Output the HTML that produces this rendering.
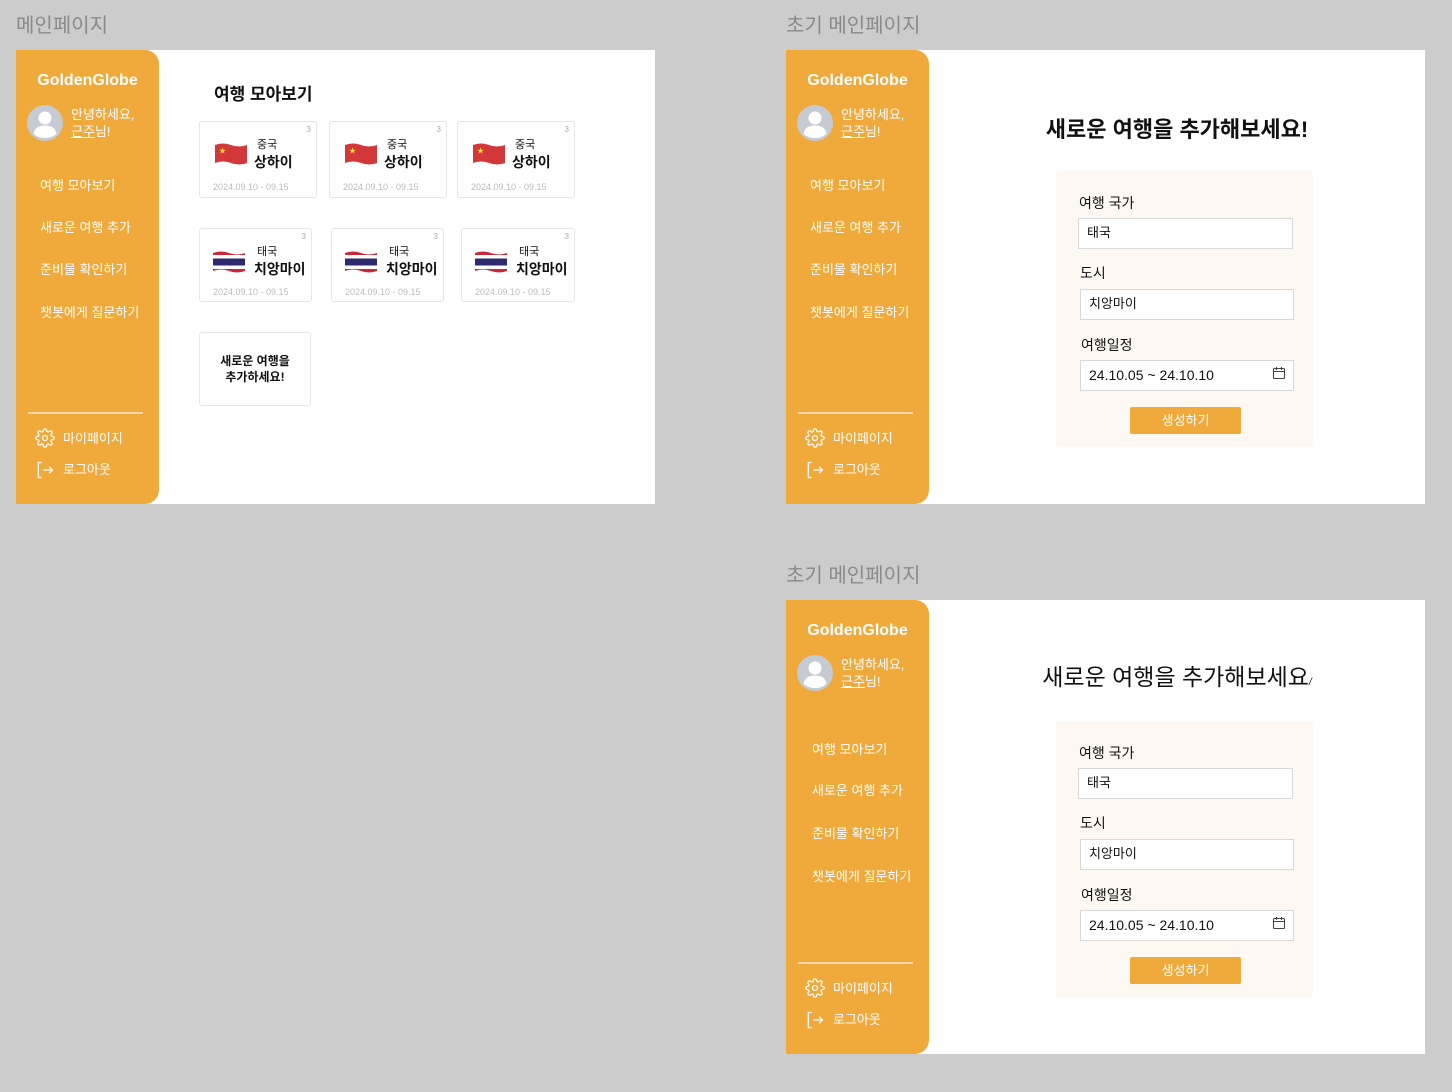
<!DOCTYPE html>
<html><head><meta charset="utf-8">
<style>
*{margin:0;padding:0;box-sizing:border-box}
body{width:1452px;height:1092px;background:#cccccc;position:relative;overflow:hidden;font-family:"Liberation Sans","Noto Sans CJK KR",sans-serif;color:#111}
.abs{position:absolute}
.lbl{position:absolute;font-size:20px;color:#8a8a8a;line-height:1}
.frame{position:absolute;width:639px;height:454px;background:#fff}
.side{position:absolute;left:0;top:0;width:143px;height:454px;background:#F0A93B;border-radius:0 14px 14px 0;color:#fff}
.logo{position:absolute;left:0;width:143px;top:22px;text-align:center;font-weight:bold;font-size:16px;line-height:18px}
.av{position:absolute;left:11px;top:55px}
.hi{position:absolute;left:55px;top:56px;font-size:13px;line-height:17px}
.hi u{text-decoration:underline}
.nav{position:absolute;font-size:13px;line-height:16px;white-space:nowrap}
.div{position:absolute;left:12px;top:362px;width:115px;height:1.5px;background:rgba(255,255,255,.55)}
.bi{position:absolute;left:47px;font-size:13px;line-height:16px}
.card{position:absolute;background:#fff;border:1px solid #e6e6e6;border-radius:3px}
.card .n{position:absolute;right:5px;top:3px;font-size:8px;color:#aaa}
.card .c{position:absolute;left:57px;top:17px;font-size:11px;line-height:13px}
.card .t{position:absolute;left:54px;top:31px;font-size:14px;font-weight:bold;line-height:18px}
.card .d{position:absolute;left:13px;top:60px;font-size:9px;color:#bbb;white-space:nowrap}
.card svg{position:absolute;left:14px;top:20px}
.panel{position:absolute;left:270px;top:121px;width:257px;height:276px;background:#FDF8F1;border-radius:4px}
.fl{position:absolute;font-size:14px;line-height:16px}
.in{position:absolute;background:#fff;border:1px solid #d8d8d8;font-size:13px;line-height:28px;padding-left:8px}
.btn{position:absolute;left:74px;top:236px;width:111px;height:27px;background:#F0A93B;border-radius:2px;color:#fff;font-size:13px;text-align:center;line-height:27px}
</style></head><body>

<div class="lbl" style="left:16px;top:16px">메인페이지</div>
<div class="lbl" style="left:786px;top:16px">초기 메인페이지</div>
<div class="lbl" style="left:786px;top:566px">초기 메인페이지</div>

<!-- FRAME 1 -->
<div class="frame" style="left:16px;top:50px">
 <div class="side">
  <div class="logo">GoldenGlobe</div>
  <svg class="av" width="36" height="36" viewBox="0 0 36 36"><circle cx="18" cy="18" r="18" fill="#c5cad3"/><circle cx="18" cy="13" r="6.5" fill="#fff"/><path d="M6.5 29c1-6 5-8.5 11.5-8.5S28.5 23 29.5 29a18 18 0 0 1-23 0z" fill="#fff"/></svg>
  <div class="hi">안녕하세요,<br><u>근주</u>님!</div>
  <div class="nav" style="left:24px;top:128px">여행 모아보기</div>
  <div class="nav" style="left:24px;top:170px">새로운 여행 추가</div>
  <div class="nav" style="left:24px;top:212px">준비물 확인하기</div>
  <div class="nav" style="left:24px;top:255px">챗봇에게 질문하기</div>
  <div class="div"></div>
  <svg class="abs" style="left:19px;top:378px" width="20" height="20" viewBox="0 0 24 24" fill="none" stroke="#fff" stroke-width="1.5"><circle cx="12" cy="12" r="3"/><path d="M19.4 15a1.7 1.7 0 0 0 .3 1.8l.1.1a2 2 0 1 1-2.8 2.8l-.1-.1a1.7 1.7 0 0 0-1.8-.3 1.7 1.7 0 0 0-1 1.5V21a2 2 0 1 1-4 0v-.1a1.7 1.7 0 0 0-1.1-1.5 1.7 1.7 0 0 0-1.8.3l-.1.1a2 2 0 1 1-2.8-2.8l.1-.1a1.7 1.7 0 0 0 .3-1.8 1.7 1.7 0 0 0-1.5-1H3a2 2 0 1 1 0-4h.1a1.7 1.7 0 0 0 1.5-1.1 1.7 1.7 0 0 0-.3-1.8l-.1-.1a2 2 0 1 1 2.8-2.8l.1.1a1.7 1.7 0 0 0 1.8.3H9a1.7 1.7 0 0 0 1-1.5V3a2 2 0 1 1 4 0v.1a1.7 1.7 0 0 0 1 1.5 1.7 1.7 0 0 0 1.8-.3l.1-.1a2 2 0 1 1 2.8 2.8l-.1.1a1.7 1.7 0 0 0-.3 1.8V9a1.7 1.7 0 0 0 1.5 1H21a2 2 0 1 1 0 4h-.1a1.7 1.7 0 0 0-1.5 1z"/></svg>
  <div class="bi" style="top:381px">마이페이지</div>
  <svg class="abs" style="left:19px;top:410px" width="20" height="20" viewBox="0 0 24 24" fill="none" stroke="#fff" stroke-width="1.5"><path d="M8 3H4v18h4"/><path d="M10 12h11M17 8l4 4-4 4"/></svg>
  <div class="bi" style="top:412px">로그아웃</div>
 </div>
 <div class="abs" style="left:198px;top:30px;font-size:17px;font-weight:bold">여행 모아보기</div>

 <div class="card" style="left:183px;top:71px;width:118px;height:77px"><span class="n">3</span>
  <svg width="34" height="24" viewBox="0 0 34 24"><path d="M1 3q8-3 16 0t16 0v18q-8 3-16 0t-16 0z" fill="#d2383a"/><text x="5" y="11" font-size="7" fill="#f7d23a">★</text></svg>
  <div class="c">중국</div><div class="t">상하이</div><div class="d">2024.09.10 - 09.15</div></div>
 <div class="card" style="left:313px;top:71px;width:118px;height:77px"><span class="n">3</span>
  <svg width="34" height="24" viewBox="0 0 34 24"><path d="M1 3q8-3 16 0t16 0v18q-8 3-16 0t-16 0z" fill="#d2383a"/><text x="5" y="11" font-size="7" fill="#f7d23a">★</text></svg>
  <div class="c">중국</div><div class="t">상하이</div><div class="d">2024.09.10 - 09.15</div></div>
 <div class="card" style="left:441px;top:71px;width:118px;height:77px"><span class="n">3</span>
  <svg width="34" height="24" viewBox="0 0 34 24"><path d="M1 3q8-3 16 0t16 0v18q-8 3-16 0t-16 0z" fill="#d2383a"/><text x="5" y="11" font-size="7" fill="#f7d23a">★</text></svg>
  <div class="c">중국</div><div class="t">상하이</div><div class="d">2024.09.10 - 09.15</div></div>

 <div class="card" style="left:183px;top:178px;width:113px;height:74px"><span class="n">3</span>
  <svg style="left:12px;top:21px" width="34" height="24" viewBox="0 0 34 24"><defs><clipPath id="w"><path d="M1 3q8-3 16 0t16 0v18q-8 3-16 0t-16 0z"/></clipPath></defs><g clip-path="url(#w)"><rect width="34" height="24" fill="#c8283a"/><rect y="5" width="34" height="14" fill="#fff"/><rect y="8.5" width="34" height="7" fill="#2d2a6e"/></g></svg>
  <div class="c">태국</div><div class="t">치앙마이</div><div class="d" style="top:58px">2024.09.10 - 09.15</div></div>
 <div class="card" style="left:315px;top:178px;width:113px;height:74px"><span class="n">3</span>
  <svg style="left:12px;top:21px" width="34" height="24" viewBox="0 0 34 24"><g clip-path="url(#w)"><rect width="34" height="24" fill="#c8283a"/><rect y="5" width="34" height="14" fill="#fff"/><rect y="8.5" width="34" height="7" fill="#2d2a6e"/></g></svg>
  <div class="c">태국</div><div class="t">치앙마이</div><div class="d" style="top:58px">2024.09.10 - 09.15</div></div>
 <div class="card" style="left:445px;top:178px;width:114px;height:74px"><span class="n">3</span>
  <svg style="left:12px;top:21px" width="34" height="24" viewBox="0 0 34 24"><g clip-path="url(#w)"><rect width="34" height="24" fill="#c8283a"/><rect y="5" width="34" height="14" fill="#fff"/><rect y="8.5" width="34" height="7" fill="#2d2a6e"/></g></svg>
  <div class="c">태국</div><div class="t">치앙마이</div><div class="d" style="top:58px">2024.09.10 - 09.15</div></div>

 <div class="card" style="left:183px;top:282px;width:112px;height:74px;text-align:center;font-size:12px;font-weight:bold;line-height:16px;padding-top:20px">새로운 여행을<br>추가하세요!</div>
</div>

<!-- FRAME 2 -->
<div class="frame" style="left:786px;top:50px">
 <div class="side">
  <div class="logo">GoldenGlobe</div>
  <svg class="av" width="36" height="36" viewBox="0 0 36 36"><circle cx="18" cy="18" r="18" fill="#c5cad3"/><circle cx="18" cy="13" r="6.5" fill="#fff"/><path d="M6.5 29c1-6 5-8.5 11.5-8.5S28.5 23 29.5 29a18 18 0 0 1-23 0z" fill="#fff"/></svg>
  <div class="hi">안녕하세요,<br><u>근주</u>님!</div>
  <div class="nav" style="left:24px;top:128px">여행 모아보기</div>
  <div class="nav" style="left:24px;top:170px">새로운 여행 추가</div>
  <div class="nav" style="left:24px;top:212px">준비물 확인하기</div>
  <div class="nav" style="left:24px;top:255px">챗봇에게 질문하기</div>
  <div class="div"></div>
  <svg class="abs" style="left:19px;top:378px" width="20" height="20" viewBox="0 0 24 24" fill="none" stroke="#fff" stroke-width="1.5"><circle cx="12" cy="12" r="3"/><path d="M19.4 15a1.7 1.7 0 0 0 .3 1.8l.1.1a2 2 0 1 1-2.8 2.8l-.1-.1a1.7 1.7 0 0 0-1.8-.3 1.7 1.7 0 0 0-1 1.5V21a2 2 0 1 1-4 0v-.1a1.7 1.7 0 0 0-1.1-1.5 1.7 1.7 0 0 0-1.8.3l-.1.1a2 2 0 1 1-2.8-2.8l.1-.1a1.7 1.7 0 0 0 .3-1.8 1.7 1.7 0 0 0-1.5-1H3a2 2 0 1 1 0-4h.1a1.7 1.7 0 0 0 1.5-1.1 1.7 1.7 0 0 0-.3-1.8l-.1-.1a2 2 0 1 1 2.8-2.8l.1.1a1.7 1.7 0 0 0 1.8.3H9a1.7 1.7 0 0 0 1-1.5V3a2 2 0 1 1 4 0v.1a1.7 1.7 0 0 0 1 1.5 1.7 1.7 0 0 0 1.8-.3l.1-.1a2 2 0 1 1 2.8 2.8l-.1.1a1.7 1.7 0 0 0-.3 1.8V9a1.7 1.7 0 0 0 1.5 1H21a2 2 0 1 1 0 4h-.1a1.7 1.7 0 0 0-1.5 1z"/></svg>
  <div class="bi" style="top:381px">마이페이지</div>
  <svg class="abs" style="left:19px;top:410px" width="20" height="20" viewBox="0 0 24 24" fill="none" stroke="#fff" stroke-width="1.5"><path d="M8 3H4v18h4"/><path d="M10 12h11M17 8l4 4-4 4"/></svg>
  <div class="bi" style="top:412px">로그아웃</div>
 </div>
 <div class="abs" style="left:143px;width:496px;top:66px;text-align:center;font-size:22px;font-weight:bold;line-height:28px">새로운 여행을 추가해보세요!</div>
 <div class="panel">
  <div class="fl" style="left:23px;top:24px">여행 국가</div>
  <div class="in" style="left:22px;top:47px;width:215px;height:31px">태국</div>
  <div class="fl" style="left:24px;top:94px">도시</div>
  <div class="in" style="left:24px;top:118px;width:214px;height:31px">치앙마이</div>
  <div class="fl" style="left:25px;top:166px">여행일정</div>
  <div class="in" style="left:24px;top:189px;width:214px;height:31px;font-size:14px">24.10.05 ~ 24.10.10</div>
  <svg class="abs" style="left:216px;top:195px" width="14" height="14" viewBox="0 0 14 14" fill="none" stroke="#444" stroke-width="1.1"><rect x="1.5" y="2.5" width="11" height="10" rx="1"/><path d="M1.5 5.5h11M4.5 1v3M9.5 1v3"/></svg>
  <div class="btn">생성하기</div>
 </div>
</div>

<!-- FRAME 3 -->
<div class="frame" style="left:786px;top:600px">
 <div class="side">
  <div class="logo">GoldenGlobe</div>
  <svg class="av" width="36" height="36" viewBox="0 0 36 36"><circle cx="18" cy="18" r="18" fill="#c5cad3"/><circle cx="18" cy="13" r="6.5" fill="#fff"/><path d="M6.5 29c1-6 5-8.5 11.5-8.5S28.5 23 29.5 29a18 18 0 0 1-23 0z" fill="#fff"/></svg>
  <div class="hi">안녕하세요,<br><u>근주</u>님!</div>
  <div class="nav" style="left:26px;top:142px">여행 모아보기</div>
  <div class="nav" style="left:26px;top:183px">새로운 여행 추가</div>
  <div class="nav" style="left:26px;top:226px">준비물 확인하기</div>
  <div class="nav" style="left:26px;top:269px">챗봇에게 질문하기</div>
  <div class="div"></div>
  <svg class="abs" style="left:19px;top:378px" width="20" height="20" viewBox="0 0 24 24" fill="none" stroke="#fff" stroke-width="1.5"><circle cx="12" cy="12" r="3"/><path d="M19.4 15a1.7 1.7 0 0 0 .3 1.8l.1.1a2 2 0 1 1-2.8 2.8l-.1-.1a1.7 1.7 0 0 0-1.8-.3 1.7 1.7 0 0 0-1 1.5V21a2 2 0 1 1-4 0v-.1a1.7 1.7 0 0 0-1.1-1.5 1.7 1.7 0 0 0-1.8.3l-.1.1a2 2 0 1 1-2.8-2.8l.1-.1a1.7 1.7 0 0 0 .3-1.8 1.7 1.7 0 0 0-1.5-1H3a2 2 0 1 1 0-4h.1a1.7 1.7 0 0 0 1.5-1.1 1.7 1.7 0 0 0-.3-1.8l-.1-.1a2 2 0 1 1 2.8-2.8l.1.1a1.7 1.7 0 0 0 1.8.3H9a1.7 1.7 0 0 0 1-1.5V3a2 2 0 1 1 4 0v.1a1.7 1.7 0 0 0 1 1.5 1.7 1.7 0 0 0 1.8-.3l.1-.1a2 2 0 1 1 2.8 2.8l-.1.1a1.7 1.7 0 0 0-.3 1.8V9a1.7 1.7 0 0 0 1.5 1H21a2 2 0 1 1 0 4h-.1a1.7 1.7 0 0 0-1.5 1z"/></svg>
  <div class="bi" style="top:381px">마이페이지</div>
  <svg class="abs" style="left:19px;top:410px" width="20" height="20" viewBox="0 0 24 24" fill="none" stroke="#fff" stroke-width="1.5"><path d="M8 3H4v18h4"/><path d="M10 12h11M17 8l4 4-4 4"/></svg>
  <div class="bi" style="top:412px">로그아웃</div>
 </div>
 <div class="abs" style="left:143px;width:496px;top:62px;text-align:center;font-size:23px;line-height:30px">새로운 여행을 추가해보세요<span style="font-size:10px;font-style:italic">/</span></div>
 <div class="panel">
  <div class="fl" style="left:23px;top:24px">여행 국가</div>
  <div class="in" style="left:22px;top:47px;width:215px;height:31px">태국</div>
  <div class="fl" style="left:24px;top:94px">도시</div>
  <div class="in" style="left:24px;top:118px;width:214px;height:31px">치앙마이</div>
  <div class="fl" style="left:25px;top:166px">여행일정</div>
  <div class="in" style="left:24px;top:189px;width:214px;height:31px;font-size:14px">24.10.05 ~ 24.10.10</div>
  <svg class="abs" style="left:216px;top:195px" width="14" height="14" viewBox="0 0 14 14" fill="none" stroke="#444" stroke-width="1.1"><rect x="1.5" y="2.5" width="11" height="10" rx="1"/><path d="M1.5 5.5h11M4.5 1v3M9.5 1v3"/></svg>
  <div class="btn">생성하기</div>
 </div>
</div>

</body></html>
